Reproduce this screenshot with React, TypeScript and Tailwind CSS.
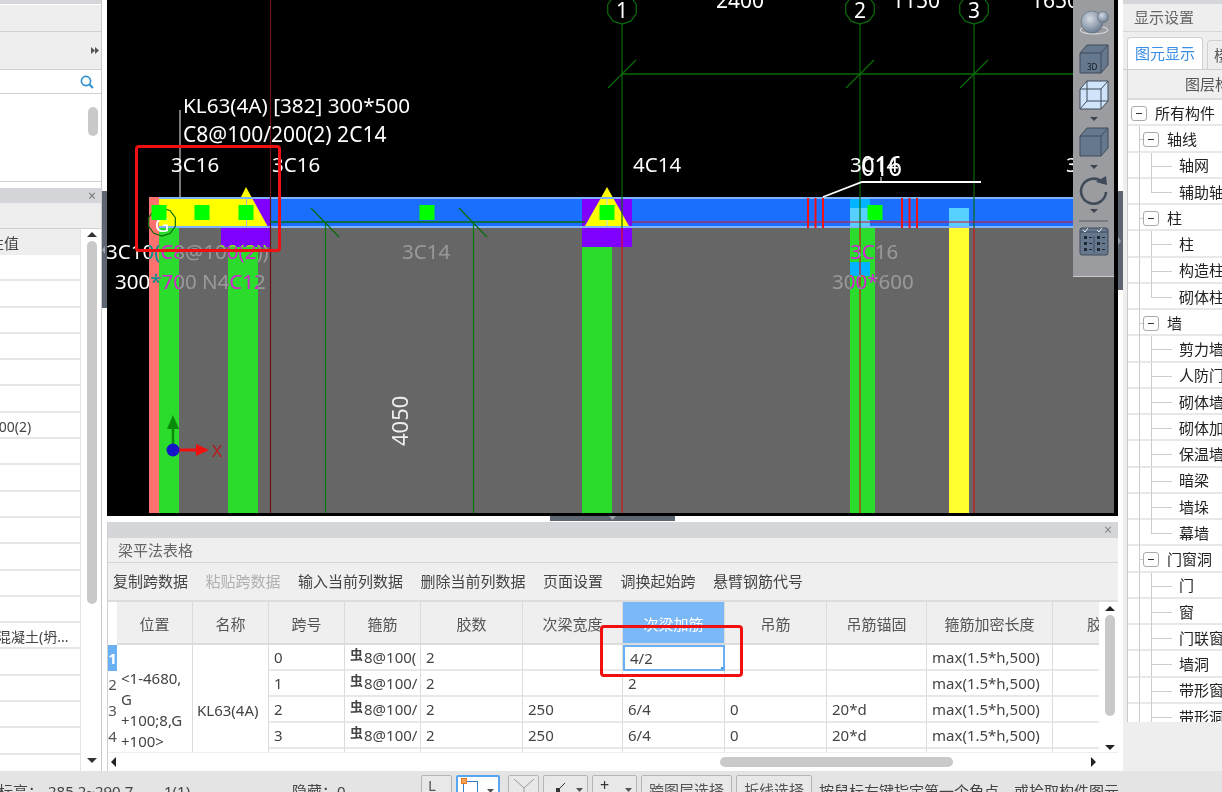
const TREE = [
  { t: '所有构件', lvl: 0 },
  { t: '轴线', lvl: 1 },
  { t: '轴网', lvl: 2 },
  { t: '辅助轴网', lvl: 2, last: true },
  { t: '柱', lvl: 1 },
  { t: '柱', lvl: 2 },
  { t: '构造柱', lvl: 2 },
  { t: '砌体柱', lvl: 2, last: true },
  { t: '墙', lvl: 1 },
  { t: '剪力墙', lvl: 2 },
  { t: '人防门框墙', lvl: 2 },
  { t: '砌体墙', lvl: 2 },
  { t: '砌体加筋', lvl: 2 },
  { t: '保温墙', lvl: 2 },
  { t: '暗梁', lvl: 2 },
  { t: '墙垛', lvl: 2 },
  { t: '幕墙', lvl: 2, last: true },
  { t: '门窗洞', lvl: 1 },
  { t: '门', lvl: 2 },
  { t: '窗', lvl: 2 },
  { t: '门联窗', lvl: 2 },
  { t: '墙洞', lvl: 2 },
  { t: '带形窗', lvl: 2 },
  { t: '带形洞', lvl: 2 },
];

const LEFT_ROWS: Record<number, { t: string; cls: string }> = {
  6: { t: 'C8@100/200(2)', cls: '-ml-[68px]' },
  14: { t: '混凝土(坍...', cls: '-ml-[3px]' },
};

const HEADS = ['位置', '名称', '跨号', '箍筋', '胶数', '次梁宽度', '次梁加筋', '吊筋', '吊筋锚固', '箍筋加密长度', '胶'];

const ROWS = [
  ['0', '8@100(', '2', '', '4/2', '', '', 'max(1.5*h,500)', ''],
  ['1', '8@100/', '2', '', '2', '', '', 'max(1.5*h,500)', ''],
  ['2', '8@100/', '2', '250', '6/4', '0', '20*d', 'max(1.5*h,500)', ''],
  ['3', '8@100/', '2', '250', '6/4', '0', '20*d', 'max(1.5*h,500)', ''],
  ['', '', '', '', '', '', '', '', ''],
];

function Tri({ dir, className = 'w-[11px] h-[6px]' }: { dir: 'up' | 'down' | 'left' | 'right'; className?: string }) {
  const pts = { up: '5,0 10,6 0,6', down: '0,0 10,0 5,6', left: '10,0 10,6 0,3', right: '0,0 10,3 0,6' }[dir];
  return (
    <svg viewBox="0 0 10 6" preserveAspectRatio="none" className={className}>
      <polygon points={pts} fill="currentColor" />
    </svg>
  );
}

function Octagon({ cx, cy, r }: { cx: number; cy: number; r: number }) {
  const pts = Array.from({ length: 10 }, (_, i) => {
    const a = (i / 10) * Math.PI * 2 + Math.PI / 10;
    return `${cx + r * Math.cos(a)},${cy + r * Math.sin(a)}`;
  }).join(' ');
  return <polygon points={pts} fill="none" stroke="#0b6b0b" strokeWidth="1.2" />;
}

function CanvasDrawing() {
  const green = '#0b6b0b';
  const label = { fontFamily: '"Noto Sans", sans-serif', fill: '#fff' };
  return (
    <svg viewBox="107 0 1011 516" className="block h-[516px] w-[1011px]">
      <rect x="107" y="0" width="1011" height="516" fill="#000" />
      <rect x="149" y="228" width="965" height="285" fill="#666" />

      {/* columns */}
      <rect x="149" y="197" width="11" height="316" fill="#ff7070" />
      <rect x="159" y="228" width="20" height="285" fill="#2cdc2c" />
      <rect x="228" y="247" width="30" height="266" fill="#2cdc2c" />
      <rect x="582" y="247" width="30" height="266" fill="#2cdc2c" />
      <rect x="850" y="228" width="25" height="285" fill="#2cdc2c" />
      <rect x="850" y="262" width="20" height="14" fill="#00b4ff" />
      <rect x="949" y="228" width="20" height="285" fill="#ffff30" />

      {/* beam */}
      <rect x="159" y="197" width="955" height="31" fill="#1a6fff" />
      <rect x="221" y="197" width="49" height="50" fill="#8000ff" />
      <rect x="582" y="199" width="50" height="48" fill="#8000ff" />
      <rect x="850" y="199" width="20" height="9" fill="#00b4ff" />
      <rect x="850" y="208" width="20" height="20" fill="#55d0ff" />
      <rect x="949" y="208" width="20" height="20" fill="#55d0ff" />
      <rect x="159" y="197" width="87" height="30" fill="#ffff00" />
      <polygon points="246,187 268,227 226,227" fill="#ffff00" />
      <polygon points="607,187 629,226 585,226" fill="#ffff00" />
      <rect x="159" y="197" width="955" height="2" fill="#7fb2ff" />
      <rect x="159" y="226" width="955" height="2" fill="#7fb2ff" />
      <line x1="607" y1="199" x2="607" y2="226" stroke="#b9d4f5" strokeWidth="1" />
      <line x1="246.5" y1="199" x2="246.5" y2="227" stroke="#9db8e0" strokeWidth="1" />

      {/* axis lines */}
      <line x1="270.5" y1="0" x2="270.5" y2="513" stroke="#6e1212" strokeWidth="1.2" />
      <line x1="622" y1="23" x2="622" y2="228" stroke={green} strokeWidth="1.2" />
      <line x1="860" y1="23" x2="860" y2="228" stroke={green} strokeWidth="1.2" />
      <line x1="974" y1="23" x2="974" y2="228" stroke={green} strokeWidth="1.2" />
      <line x1="622" y1="228" x2="622" y2="513" stroke="#d21414" strokeWidth="1.2" />
      <line x1="860" y1="228" x2="860" y2="513" stroke="#d21414" strokeWidth="1.2" />
      <line x1="974" y1="228" x2="974" y2="513" stroke="#d21414" strokeWidth="1.2" />
      <line x1="622" y1="74" x2="1074" y2="74" stroke={green} strokeWidth="1.6" />
      <line x1="608" y1="88" x2="636" y2="60" stroke={green} strokeWidth="1.2" />
      <line x1="846" y1="88" x2="874" y2="60" stroke={green} strokeWidth="1.2" />
      <line x1="960" y1="88" x2="988" y2="60" stroke={green} strokeWidth="1.2" />
      <Octagon cx={622} cy={9} r={15} />
      <Octagon cx={860} cy={9} r={15} />
      <Octagon cx={974} cy={9} r={15} />
      <line x1="270" y1="222" x2="585" y2="222" stroke={green} strokeWidth="1.5" />
      <line x1="632" y1="222" x2="1074" y2="222" stroke="#e01030" strokeWidth="1.2" />
      <line x1="325.5" y1="222" x2="325.5" y2="513" stroke="#0a7a0a" strokeWidth="1.2" />
      <line x1="473.5" y1="222" x2="473.5" y2="513" stroke="#0a7a0a" strokeWidth="1.2" />
      <line x1="311" y1="208" x2="339" y2="237" stroke={green} strokeWidth="1.2" />
      <line x1="459" y1="208" x2="487" y2="237" stroke={green} strokeWidth="1.2" />

      {/* rebar ticks */}
      {[808, 815.5, 823, 902, 909.5, 917].map((x) => (
        <line key={x} x1={x} y1="198" x2={x} y2="228" stroke="#f01414" strokeWidth="2" />
      ))}

      {/* G axis mark */}
      <Octagon cx={162} cy={222} r={14} />
      <text x="162" y="232" fontSize="20" textAnchor="middle" {...label}>G</text>

      {/* green grips */}
      {[159, 202, 246, 427, 607, 875].map((x) => (
        <rect key={x} x={x - 7.5} y="205" width="15" height="15" fill="#00ff00" />
      ))}

      {/* leader lines */}
      <polyline points="823,197 862,182 981,182" fill="none" stroke="#fff" strokeWidth="1.8" />
      <line x1="881" y1="177" x2="881" y2="182" stroke="#fff" strokeWidth="1" />
      <line x1="180" y1="110" x2="180" y2="197" stroke="#c8c8c8" strokeWidth="1.2" />

      {/* top dimensions */}
      <text x="716" y="8" fontSize="21" {...label}>2400</text>
      <text x="892" y="8" fontSize="21" {...label}>1150</text>
      <text x="1031" y="8" fontSize="21" {...label}>1650</text>
      <text x="622" y="18" fontSize="21" textAnchor="middle" {...label}>1</text>
      <text x="860" y="18" fontSize="21" textAnchor="middle" {...label}>2</text>
      <text x="974" y="18" fontSize="21" textAnchor="middle" {...label}>3</text>

      {/* beam labels */}
      <text x="183" y="113" fontSize="20.7" {...label}>KL63(4A) [382] 300*500</text>
      <text x="183" y="142" fontSize="21" {...label}>C8@100/200(2) 2C14</text>
      <text x="171" y="172" fontSize="20.5" {...label}>3C16</text>
      <text x="272" y="172" fontSize="20.5" {...label}>3C16</text>
      <text x="633" y="172" fontSize="20.5" {...label}>4C14</text>
      <text x="850" y="172" fontSize="20.5" {...label}>3C14</text>
      <text x="861" y="176" fontSize="27" textLength="41" lengthAdjust="spacingAndGlyphs" {...label}>016</text>
      <text x="1066" y="172" fontSize="20.5" {...label}>3</text>

      <g className="mix-blend-difference">
        <text x="106" y="259" fontSize="20.5" {...label}>3C10(C8@100(2))</text>
        <text x="115" y="289" fontSize="20.5" {...label}>300*700 N4C12</text>
        <text x="402" y="259" fontSize="20.5" {...label}>3C14</text>
        <text x="850" y="259" fontSize="20.5" {...label}>3C16</text>
        <text x="832" y="289" fontSize="20.5" {...label}>300*600</text>
      </g>

      <text x="0" y="0" fontSize="22" transform="translate(408 446) rotate(-90)" fontFamily='"Noto Sans", sans-serif' fill="#eee">4050</text>

      {/* ucs */}
      <line x1="173" y1="450" x2="173" y2="425" stroke="#0a8a0a" strokeWidth="2.5" />
      <polygon points="173,415 167,429 179,429" fill="#0a8a0a" />
      <line x1="173" y1="450" x2="198" y2="450" stroke="#f01010" strokeWidth="3" />
      <polygon points="209,450 196,444 196,456" fill="#f01010" />
      <circle cx="173" cy="450" r="6.5" fill="#1414c8" />
      <text x="212" y="457" fontSize="17" fontFamily='"Noto Sans", sans-serif' fill="#b81a1a">X</text>
    </svg>
  );
}

function Toolbar() {
  const steel = '#66788e';
  const edge = '#3f4a58';
  return (
    <div className="absolute left-[966px] top-0 flex h-[277px] w-[41px] flex-col items-center border-b border-[#c9cacc] bg-[#9a9ca0] pt-[9px] text-[#3d4550]">
      <svg viewBox="0 0 30 26" className="h-[26px] w-[30px]">
        <defs>
          <radialGradient id="ball" cx="40%" cy="35%" r="70%">
            <stop offset="0%" stopColor="#d5dce4" />
            <stop offset="100%" stopColor="#66788e" />
          </radialGradient>
        </defs>
        <ellipse cx="15" cy="21" rx="14" ry="4" fill="none" stroke="#dfe3e8" strokeWidth="1" />
        <circle cx="13" cy="13" r="11" fill="url(#ball)" stroke="#5d6874" strokeWidth="0.6" />
        <circle cx="24" cy="8" r="5.5" fill="url(#ball)" stroke="#5d6874" strokeWidth="0.6" />
      </svg>
      <svg viewBox="0 0 30 30" className="mt-[9px] h-[30px] w-[30px]">
        <polygon points="1,9 8,1 29,1 29,21 22,29 1,29" fill={steel} stroke={edge} />
        <path d="M1 9 H22 V29 M22 9 L29 1" fill="none" stroke={edge} />
        <text x="8" y="26" fontSize="8" fontFamily='"Noto Sans", sans-serif' fill="#10151c">3D</text>
      </svg>
      <svg viewBox="0 0 30 30" className="mt-[6px] h-[30px] w-[30px]">
        <polygon points="1,9 8,1 29,1 29,21 22,29 1,29" fill="#cfe3fb" stroke={edge} />
        <path d="M1 9 H22 V29 M22 9 L29 1 M8 1 V21 H29 M8 21 L1 29" fill="none" stroke={edge} />
      </svg>
      <Tri dir="down" className="mt-[7px] h-[4px] w-[8px]" />
      <svg viewBox="0 0 30 30" className="mt-[6px] h-[30px] w-[30px]">
        <polygon points="1,9 8,1 29,1 29,21 22,29 1,29" fill={steel} stroke={edge} />
        <path d="M1 9 H22 V29 M22 9 L29 1" fill="none" stroke={edge} />
      </svg>
      <Tri dir="down" className="mt-[8px] h-[4px] w-[8px]" />
      <svg viewBox="0 0 30 30" className="mt-[6px] h-[30px] w-[30px]">
        <path d="M24 8 A12.5 12.5 0 1 0 27 17" fill="none" stroke={edge} strokeWidth="2.6" />
        <polygon points="17,7 28,10 27,1" fill={edge} />
      </svg>
      <Tri dir="down" className="mt-[4px] h-[4px] w-[8px]" />
      <div className="mt-[7px] h-[2px] w-[29px] bg-[#777a80]" />
      <svg viewBox="0 0 30 30" className="mt-[4px] h-[30px] w-[30px]">
        <rect x="1" y="2" width="28" height="27" rx="2" fill={steel} stroke={edge} />
        <path d="M1 6 H29 M15 10 V27" stroke={edge} fill="none" />
        {[10, 16, 22].map((y) => (
          <g key={y} fill="#1f2833">
            <rect x="5" y={y} width="3" height="3" />
            <rect x="10" y={y + 1} width="3" height="1" />
            <rect x="18" y={y} width="3" height="3" />
            <rect x="23" y={y + 1} width="3" height="1" />
          </g>
        ))}
        <path d="M4 4 l2 2 l3 -4 M18 4 l2 2 l3 -4" fill="none" stroke="#e6ebf0" strokeWidth="1" />
      </svg>
    </div>
  );
}

function LeftPanel() {
  return (
    <div className="flex w-[102px] shrink-0 flex-col border-r border-[#c8c8c8] bg-white">
      <div className="h-[4px] bg-[#d5d6d9]" />
      <div className="mt-px h-[27px] border-b border-[#d0d0d0] bg-[#eeeeee]" />
      <div className="flex h-[38px] items-center justify-end border-b border-[#d0d0d0] bg-[#eeeeee] pr-[2px] text-[#555]">
        <Tri dir="right" className="h-[7px] w-[4px]" />
        <Tri dir="right" className="h-[7px] w-[4px]" />
      </div>
      <div className="flex h-[24px] items-center justify-end border-b border-[#d0d0d0] pr-[7px]">
        <svg viewBox="0 0 14 14" className="h-[14px] w-[14px]">
          <circle cx="6" cy="6" r="4.6" fill="none" stroke="#2c8ed0" strokeWidth="1.6" />
          <line x1="9.5" y1="9.5" x2="13" y2="13" stroke="#2c8ed0" strokeWidth="2" />
        </svg>
      </div>
      <div className="flex h-[88px] justify-end border-b border-[#d0d0d0] pr-[3px] pt-[13px]">
        <div className="h-[29px] w-[10px] rounded-[5px] bg-[#c9c9c9]" />
      </div>
      <div className="h-[6px] bg-white" />
      <div className="flex h-[15px] items-center justify-end bg-[#d5d6d9] pr-[5px] text-[14px] leading-none text-[#777]">×</div>
      <div className="h-[26px] border-b border-[#d0d0d0] bg-[#eeeeee]" />
      <div className="flex h-[542px] overflow-hidden">
        <div className="w-[81px] shrink-0 overflow-hidden border-r border-[#e4e4e4]">
          <div className="flex h-[26px] items-center bg-[#eeeeee] pt-[3px] text-[#444]">
            <span className="-ml-[26px] whitespace-nowrap">属性值</span>
          </div>
          {Array.from({ length: 20 }, (_, i) => (
            <div key={i} className="flex h-[26.3px] items-center overflow-hidden whitespace-nowrap border-b-2 border-[#e6e6e6] pt-[3px] text-[14px] text-[#444]">
              {LEFT_ROWS[i] && <span className={LEFT_ROWS[i].cls}>{LEFT_ROWS[i].t}</span>}
            </div>
          ))}
        </div>
        <div className="flex w-[20px] flex-col items-center pl-[1px] pt-[3px] text-[#333]">
          <Tri dir="up" className="h-[5px] w-[10px]" />
          <div className="mt-[4px] h-[363px] w-[10px] rounded-[5px] bg-[#c9c9c9]" />
          <Tri dir="down" className="mt-[154px] h-[5px] w-[10px]" />
        </div>
      </div>
    </div>
  );
}

function GridPanel() {
  const headBase = 'flex h-[43px] items-center justify-center overflow-hidden whitespace-nowrap border-r border-b-2 border-[#dcdcdc] pt-[3px]';
  const cellBase = 'flex h-[26px] items-center overflow-hidden whitespace-nowrap bg-white pl-[5px] text-[#444]';
  return (
    <div className="relative flex min-h-0 flex-1 flex-col border-l border-[#d0d0d0] bg-white">
      <div className="flex h-[15px] shrink-0 items-center justify-end bg-[#d5d6d9] pr-[6px] text-[14px] leading-none text-[#888]">×</div>
      <div className="flex h-[26px] shrink-0 items-center border-b border-t border-[#d6d6d6] bg-[#efefef] pl-[10px] text-[#666]">梁平法表格</div>
      <div className="flex h-[39px] shrink-0 items-center gap-[17.5px] border-b-2 border-[#dcdcdc] bg-[#efefef] pl-[5px] text-[#444]">
        <span>复制跨数据</span>
        <span className="text-[#b0b0b0]">粘贴跨数据</span>
        <span>输入当前列数据</span>
        <span>删除当前列数据</span>
        <span>页面设置</span>
        <span>调换起始跨</span>
        <span>悬臂钢筋代号</span>
      </div>
      <div className="flex h-[150px] shrink-0 overflow-hidden">
        <div className="w-[991px] shrink-0 overflow-hidden">
          <div className="grid h-[175px] w-[1029px] grid-cols-[9px_76px_76px_76px_76px_102px_100px_102px_102px_100px_126px_84px] grid-rows-[43px_26px_26px_26px_26px_26px]">
            <div className="bg-white" />
            {HEADS.map((h, i) => (
              <div key={h} className={i === 6 ? `${headBase} bg-[#7ab8f8] text-white` : `${headBase} bg-[#efefef] text-[#555]`}>
                {h}
              </div>
            ))}
            {[0, 1, 2, 3, 4].map((r) => (
              <div
                key={r}
                className={r === 0 ? 'col-start-1 flex items-center justify-center bg-[#6bb0f5] font-bold text-white' : 'col-start-1 flex items-center justify-center text-[#555]'}
                style={{ gridRowStart: r + 2 }}
              >
                {r < 4 ? r + 1 : ''}
              </div>
            ))}
            <div className="col-start-2 row-span-5 row-start-2 flex items-center border-r border-[#dcdcdc] pl-[4px] leading-[21px] text-[#444]">
              <div>
                &lt;1-4680,
                <br />G
                <br />+100;8,G
                <br />+100&gt;
              </div>
            </div>
            <div className="col-start-3 row-span-5 row-start-2 flex items-center border-r border-[#dcdcdc] pl-[4px] text-[#444]">KL63(4A)</div>
            {ROWS.map((row, r) =>
              row.map((v, c) => {
                const active = r === 0 && c === 4;
                return (
                  <div
                    key={`${r}-${c}`}
                    className={active ? `${cellBase} relative border-2 border-[#6bb0f5]` : `${cellBase} border-r border-b-2 border-r-[#dcdcdc] border-b-[#e8e8e8]`}
                    style={{ gridColumnStart: c + 4, gridRowStart: r + 2 }}
                  >
                    {c === 1 && v && <span className="mr-px -translate-y-[2px] text-[13px] font-bold">虫</span>}
                    {v}
                    {active && <span className="absolute bottom-[-2px] right-[-2px] h-[4px] w-[4px] bg-[#4a90e2]" />}
                  </div>
                );
              }),
            )}
          </div>
        </div>
        <div className="flex w-[18px] shrink-0 flex-col items-center pl-[4px] pt-[4px] text-[#222]">
          <Tri dir="up" className="h-[5px] w-[10px]" />
          <div className="mt-[4px] h-[101px] w-[10px] rounded-[5px] bg-[#c9c9c9]" />
          <Tri dir="down" className="mt-[29px] h-[5px] w-[10px]" />
        </div>
      </div>
      <div className="flex h-[18px] shrink-0 items-center border-t border-[#eeeeee] pl-[3px] text-[#222]">
        <Tri dir="left" className="h-[10px] w-[5px]" />
        <div className="ml-[604px] h-[10px] w-[233px] rounded-[5px] bg-[#c9c9c9]" />
        <Tri dir="right" className="ml-[138px] h-[10px] w-[5px]" />
      </div>
      <div className="absolute left-[492px] top-[103px] h-[52px] w-[143px] rounded-[4px] border-[3px] border-[#f01010]" />
    </div>
  );
}

function RightPanel() {
  return (
    <div className="flex min-w-0 flex-1 flex-col overflow-hidden bg-[#eeeeee]">
      <div className="h-[4px] shrink-0 bg-[#d5d6d9]" />
      <div className="flex h-[28px] shrink-0 items-center border-b border-[#d6d6d6] pl-[11px] text-[#666]">显示设置</div>
      <div className="flex h-[38px] shrink-0 items-end gap-[4px] border-b border-[#cfcfcf] pl-[4px]">
        <div className="flex h-[32px] w-[76px] shrink-0 items-center justify-center whitespace-nowrap rounded-t-[4px] border border-b-0 border-[#d0d0d0] bg-white text-[#3a8ee6]">图元显示</div>
        <div className="flex h-[29px] w-[40px] shrink-0 items-center whitespace-nowrap rounded-t-[4px] border border-b-0 border-[#d0d0d0] pl-[6px] text-[#555]">楼层</div>
      </div>
      <div className="ml-[4px] h-[652px] shrink-0 overflow-hidden border-l border-[#c8c8c8] bg-white">
        <div className="flex h-[30px] items-center border-b-2 border-[#dcdcdc] bg-[#efefef] pl-[57px] text-[#555]">
          <span className="whitespace-nowrap">图层构件</span>
        </div>
        {TREE.map((n, i) => (
          <div key={i} className="relative flex h-[26.25px] items-center whitespace-nowrap border-b-2 border-[#e8e8e8] pt-[2px] text-[#222]">
            {n.lvl >= 1 && <span className="absolute left-[11px] top-0 h-[26px] w-px bg-[#ccc]" />}
            {n.lvl === 1 && <span className="absolute left-[11px] top-[13px] h-px w-[5px] bg-[#ccc]" />}
            {n.lvl === 2 && <span className={n.last ? 'absolute left-[23px] top-0 h-[13px] w-px bg-[#ccc]' : 'absolute left-[23px] top-0 h-[26px] w-px bg-[#ccc]'} />}
            {n.lvl === 2 && <span className="absolute left-[23px] top-[13px] h-px w-[21px] bg-[#ccc]" />}
            {n.lvl < 2 ? (
              <div className={n.lvl === 0 ? 'z-10 ml-[3px] flex items-center' : 'z-10 ml-[15px] flex items-center'}>
                <span className="flex h-[15px] w-[16px] items-center justify-center rounded-[3px] border border-[#aaa] bg-white">
                  <span className="h-px w-[6px] bg-[#333]" />
                </span>
                <span className="ml-[8px]">{n.t}</span>
              </div>
            ) : (
              <span className="ml-[51px]">{n.t}</span>
            )}
          </div>
        ))}
      </div>
    </div>
  );
}

function StatusBar() {
  const btn = 'flex h-[24px] shrink-0 items-start justify-center rounded-t-[2px] border border-[#b5b5b5] bg-[#e8e8e8] text-[#555]';
  const btnBare = 'flex h-[24px] shrink-0 items-start rounded-t-[2px] border border-[#b5b5b5] bg-[#e8e8e8] text-[#555]';
  return (
    <div className="flex h-[21px] shrink-0 items-start overflow-hidden whitespace-nowrap bg-[#e4e4e4] text-[15px] text-[#444]">
      <span className="-ml-[2px] mt-[9px] w-[50px]">标高：</span>
      <span className="mt-[9px] w-[116px]">285.2~290.7</span>
      <span className="mt-[9px] w-[128px]">1(1)</span>
      <span className="mt-[9px] w-[129px]">隐藏：0</span>
      <div className="mt-[4px] flex items-start">
        <div className={`${btnBare} w-[31px] pl-[6px]`}>
          <span className="text-[15px] leading-[18px]">L</span>
        </div>
        <div className="relative ml-[4px] flex h-[24px] w-[44px] shrink-0 rounded-t-[2px] border-2 border-[#58a6ef] bg-white text-[#555]">
          <span className="ml-[5px] mt-[4px] h-[20px] w-[15px] border border-[#3a7fc8]" />
          <span className="absolute left-[3px] top-[1px] h-[6px] w-[6px] border border-[#e07a20] bg-[#f5a25a]" />
          <Tri dir="down" className="absolute right-[4px] top-[12px] h-[4px] w-[7px]" />
        </div>
        <div className={`${btn} ml-[8px] w-[31px]`}>
          <svg viewBox="0 0 24 14" className="mt-[2px] h-[14px] w-[24px]">
            <path d="M2 1 L12 10 L22 1 M12 10 V14" fill="none" stroke="#999" />
          </svg>
        </div>
        <div className={`${btn} relative ml-[4px] w-[45px]`}>
          <svg viewBox="0 0 14 14" className="absolute left-[10px] top-[4px] h-[14px] w-[14px]">
            <path d="M2 12 L11 3" stroke="#333" />
            <rect x="2" y="8" width="4" height="4" fill="#333" />
          </svg>
          <Tri dir="down" className="absolute right-[4px] top-[12px] h-[4px] w-[7px]" />
        </div>
        <div className={`${btn} relative ml-[4px] w-[45px]`}>
          <span className="absolute left-[7px] top-[-1px] text-[16px] leading-[20px] text-[#333]">+</span>
          <Tri dir="down" className="absolute right-[4px] top-[12px] h-[4px] w-[7px]" />
        </div>
        <div className={`${btn} ml-[4px] w-[91px] pt-[4px] text-[15px] leading-[20px]`}>跨图层选择</div>
        <div className={`${btn} ml-[4px] w-[76px] pt-[4px] text-[15px] leading-[20px]`}>折线选择</div>
      </div>
      <span className="ml-[7px] mt-[9px] text-[15px]">按鼠标左键指定第一个角点，或拾取构件图元</span>
    </div>
  );
}

export default function App() {
  return (
    <div className="relative flex h-[792px] w-[1222px] flex-col overflow-hidden bg-white font-['Noto_Sans','Noto_Sans_CJK_SC',sans-serif] text-[15px]">
      <div className="flex h-[771px] shrink-0">
        <LeftPanel />
        <div className="flex w-[5px] shrink-0 flex-col">
          <div className="h-[191px]" />
          <div className="flex h-[117px] items-center bg-[#5d6670] text-[#9aa3ad]">
            <Tri dir="left" className="h-[8px] w-[3px]" />
          </div>
        </div>
        <div className="flex w-[1011px] shrink-0 flex-col">
          <div className="relative h-[516px] shrink-0">
            <CanvasDrawing />
            <Toolbar />
          </div>
          <div className="flex h-[6px] shrink-0 justify-center">
            <div className="flex h-[5px] w-[125px] justify-center bg-[#5d6670] text-[#9aa3ad]">
              <Tri dir="down" className="h-[4px] w-[7px]" />
            </div>
          </div>
          <GridPanel />
        </div>
        <div className="flex w-[5px] shrink-0 flex-col">
          <div className="h-[191px]" />
          <div className="flex h-[99px] items-center bg-[#5d6670] text-[#9aa3ad]">
            <Tri dir="right" className="h-[8px] w-[3px]" />
          </div>
        </div>
        <RightPanel />
      </div>
      <StatusBar />
      <div className="absolute left-[135px] top-[145px] h-[107px] w-[146px] rounded-[4px] border-[3px] border-[#f01010]" />
    </div>
  );
}
